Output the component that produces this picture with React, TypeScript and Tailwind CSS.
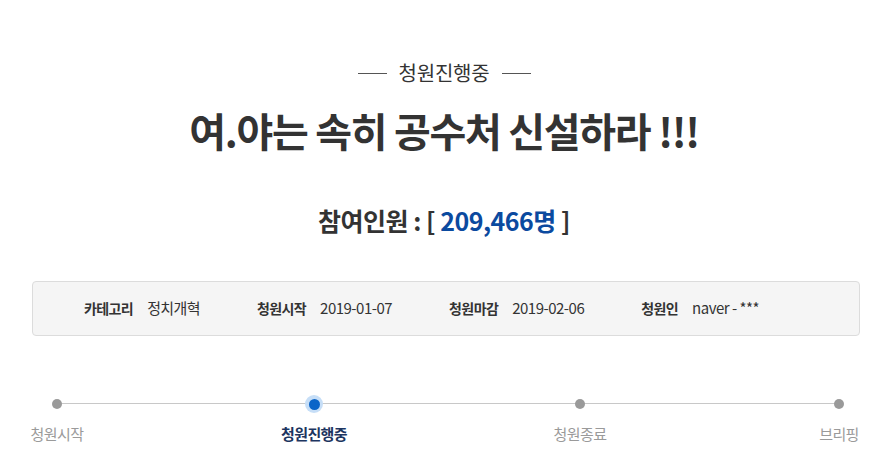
import React from "react";

const font = { fontFamily: '"Noto Sans CJK KR", "Noto Sans", sans-serif' };

function Dot({ active }: { active?: boolean }) {
  if (active) {
    return (
      <div className="relative z-10 flex h-[18px] w-[18px] items-center justify-center rounded-full bg-[#c6def7]">
        <div className="h-[11px] w-[11px] rounded-full bg-[#0a64c8]" />
      </div>
    );
  }
  return <div className="relative z-10 h-[10px] w-[10px] rounded-full bg-[#9a9a9a]" />;
}

function Step({ label, active, w, ml }: { label: string; active?: boolean; w: string; ml: string }) {
  return (
    <div className={`flex flex-col items-center ${w} ${ml}`}>
      <div className="flex h-[18px] items-center justify-center">
        <Dot active={active} />
      </div>
      <div
        className={`mt-[11px] whitespace-nowrap text-[15px] leading-[20px] tracking-[-0.6px] ${
          active ? "font-bold text-[#1d3560]" : "text-[#9a9a9a]"
        }`}
      >
        {label}
      </div>
    </div>
  );
}

export default function App() {
  return (
    <div className="h-[475px] w-[888px] overflow-hidden bg-white text-[#333]" style={font}>
      <div className="flex flex-col items-center pt-[60px]">
        <div className="flex items-center gap-[12px]">
          <div className="h-px w-[29px] bg-[#555]" />
          <div className="text-[20px] leading-[26px] tracking-[-0.2px] text-[#333]">청원진행중</div>
          <div className="h-px w-[29px] bg-[#555]" />
        </div>
        <h1 className="mt-[18px] text-[40px] font-bold leading-[52px] tracking-[-1.3px] text-[#333]">
          여.야는 속히 공수처 신설하라 !!!
        </h1>
        <div className="mt-[47px] text-[25px] font-bold leading-[34px] tracking-[-0.5px] text-[#333]">
          참여인원 : [ <span className="text-[#0b4a9f]">209,466명</span> ]
        </div>
      </div>

      <div className="ml-[32px] mr-[28px] mt-[44px] flex h-[55px] items-center gap-[57px] rounded-[4px] border border-[#dcdcdc] bg-[#f5f5f5] pl-[51px] text-[#333]">
        <div className="flex items-center gap-[14px]">
          <span className="text-[14px] font-bold tracking-[-0.6px]">카테고리</span>
          <span className="text-[15px] tracking-[-0.6px]">정치개혁</span>
        </div>
        <div className="flex items-center gap-[14px]">
          <span className="text-[14px] font-bold tracking-[-0.6px]">청원시작</span>
          <span className="text-[15px] tracking-[-0.5px]">2019-01-07</span>
        </div>
        <div className="flex items-center gap-[14px]">
          <span className="text-[14px] font-bold tracking-[-0.6px]">청원마감</span>
          <span className="text-[15px] tracking-[-0.5px]">2019-02-06</span>
        </div>
        <div className="flex items-center gap-[14px]">
          <span className="text-[14px] font-bold tracking-[-0.6px]">청원인</span>
          <span className="text-[15px] tracking-[-0.5px]">naver - ***</span>
        </div>
      </div>

      <div className="relative ml-[32px] mr-[28px] mt-[59px] flex">
        <div className="absolute left-[25px] right-[21px] top-[8px] h-px bg-[#c8c8c8]" />
        <Step label="청원시작" w="w-[50px]" ml="ml-0" />
        <Step label="청원진행중" active w="w-[80px]" ml="ml-[192px]" />
        <Step label="청원종료" w="w-[60px]" ml="ml-[196px]" />
        <Step label="브리핑" w="w-[42px]" ml="ml-[208px]" />
      </div>
    </div>
  );
}
